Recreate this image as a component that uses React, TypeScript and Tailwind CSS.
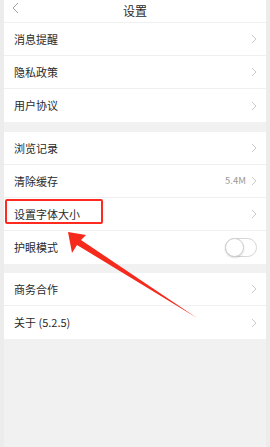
import React from "react";

const font = { fontFamily: '"Noto Sans CJK SC", "Noto Sans", sans-serif' };

function Chevron() {
  return (
    <svg width="6" height="10" viewBox="0 0 6 10" className="shrink-0">
      <path d="M1 1 L5 5 L1 9" fill="none" stroke="#c4c4c4" strokeWidth="0.9" />
    </svg>
  );
}

function Toggle() {
  return (
    <div className="relative w-[32px] h-[19px] rounded-full border border-[#d6d6d6] bg-white">
      <div className="absolute left-[-1px] top-[-1px] w-[19px] h-[19px] rounded-full bg-white border border-[#cfcfcf] shadow-[0_1px_2px_rgba(0,0,0,0.15)]" />
    </div>
  );
}

interface Row {
  label: string;
  value?: string;
  toggle?: boolean;
}

function Group({ rows }: { rows: Row[] }) {
  return (
    <div className="bg-white">
      {rows.map((row, idx) => (
        <div
          key={row.label}
          className={`h-[33px] flex items-center justify-between pl-[10px] pr-[9px] ${
            idx < rows.length - 1 ? "border-b border-[#efefef]" : ""
          }`}
        >
          <span className="text-[11px] text-[#2a2a2a] leading-none">{row.label}</span>
          {row.toggle ? (
            <Toggle />
          ) : (
            <div className="flex items-center gap-[5px]">
              {row.value && <span className="text-[9.5px] text-[#999] leading-none">{row.value}</span>}
              <Chevron />
            </div>
          )}
        </div>
      ))}
    </div>
  );
}

export default function App() {
  return (
    <div className="relative w-[270px] h-[447px] bg-[#ececec] overflow-hidden" style={font}>
      <div className="mx-[4px] w-[262px] h-full bg-[#f1f1f1]">
        {/* Header */}
        <div className="h-[23px] bg-white relative flex items-center justify-center border-b border-[#f0f0f0]">
          <svg width="8" height="12" viewBox="0 0 8 12" className="absolute left-[8px] top-[2px]">
            <path d="M6 1 L1 6 L6 11" fill="none" stroke="#9a9a9a" strokeWidth="0.9" />
          </svg>
          <span className="text-[12px] text-[#2a2a2a] leading-none">设置</span>
        </div>

        <Group rows={[{ label: "消息提醒" }, { label: "隐私政策" }, { label: "用户协议" }]} />
        <div className="h-[10px]" />
        <Group
          rows={[
            { label: "浏览记录" },
            { label: "清除缓存", value: "5.4M" },
            { label: "设置字体大小" },
            { label: "护眼模式", toggle: true },
          ]}
        />
        <div className="h-[9px]" />
        <Group rows={[{ label: "商务合作" }, { label: "关于 (5.2.5)" }]} />
      </div>

      {/* Annotation: red box and arrow */}
      <div className="absolute left-[5px] top-[199px] w-[98px] h-[25px] border-2 border-[#ff2a1f] rounded-[2px]" />
      <svg className="absolute left-0 top-0" width="270" height="447" viewBox="0 0 270 447">
        <polygon points="68,232 86,235 81,240 197,318 77,245 72,253" fill="#f52a1c" />
      </svg>
    </div>
  );
}
